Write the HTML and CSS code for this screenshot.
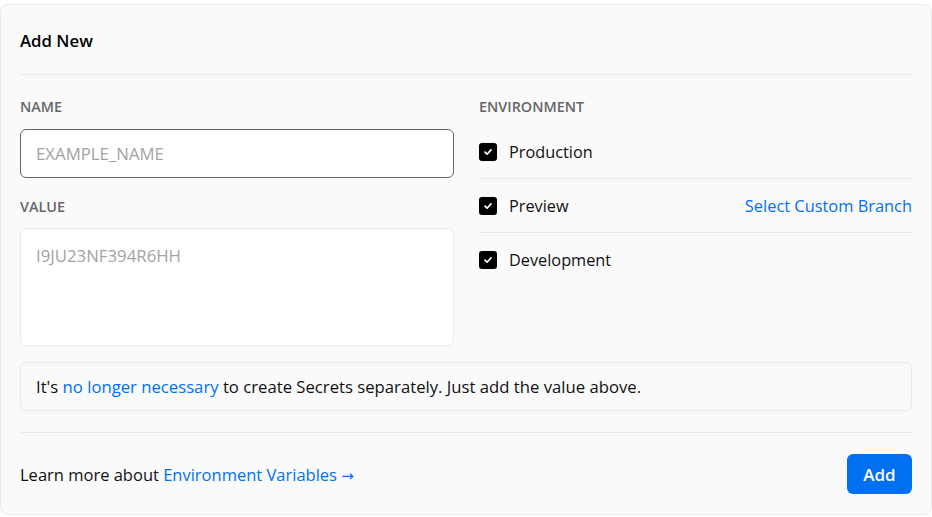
FILE: index.html
```html
<!DOCTYPE html>
<html>
<head>
<meta charset="utf-8">
<link rel="stylesheet" href="styles.css">
</head>
<body>
<div class="card">
  <div class="header">Add New</div>
  <div class="form">
    <div class="col">
      <div class="label">NAME</div>
      <div class="input"><span class="ph">EXAMPLE_NAME</span></div>
      <div class="label label-value">VALUE</div>
      <div class="textarea"><span class="ph">I9JU23NF394R6HH</span></div>
    </div>
    <div class="col">
      <div class="label">ENVIRONMENT</div>
      <div class="envs">
        <div class="env">
          <span class="cb"><svg width="10" height="10" viewBox="0 0 10 10"><path d="M2 5.2 L4.1 7.2 L8 2.9" fill="none" stroke="#fff" stroke-width="1.7" stroke-linecap="round" stroke-linejoin="round"/></svg></span>
          <span class="env-name">Production</span>
        </div>
        <div class="env">
          <span class="cb"><svg width="10" height="10" viewBox="0 0 10 10"><path d="M2 5.2 L4.1 7.2 L8 2.9" fill="none" stroke="#fff" stroke-width="1.7" stroke-linecap="round" stroke-linejoin="round"/></svg></span>
          <span class="env-name">Preview</span>
          <a class="link branch">Select Custom Branch</a>
        </div>
        <div class="env">
          <span class="cb"><svg width="10" height="10" viewBox="0 0 10 10"><path d="M2 5.2 L4.1 7.2 L8 2.9" fill="none" stroke="#fff" stroke-width="1.7" stroke-linecap="round" stroke-linejoin="round"/></svg></span>
          <span class="env-name">Development</span>
        </div>
      </div>
    </div>
  </div>
  <div class="notice-wrap">
    <div class="notice">It's <a class="link">no longer necessary</a> to create Secrets separately. Just add the value above.</div>
  </div>
  <div class="footer">
    <div class="learn">Learn more about <a class="link">Environment Variables <span class="arrow">→</span></a></div>
    <button class="add">Add</button>
  </div>
</div>
</body>
</html>
```

FILE: styles.css
```css
html, body {
  margin: 0;
  padding: 0;
  background: #fff;
}
body {
  font-family: "Open Sans", "Noto Sans", sans-serif;
  color: #111;
  font-size: 16.5px;
}
.card {
  margin-top: 4px;
  width: 932px;
  height: 511px;
  box-sizing: border-box;
  border: 1px solid #eaeaea;
  border-radius: 8px;
  background: #fafafa;
  padding: 0 19px;
}
.header {
  font-size: 16.8px;
  font-weight: 600;
  line-height: 24px;
  padding: 24px 0 21px;
  border-bottom: 1px solid #eaeaea;
  color: #000;
}
.form {
  display: grid;
  grid-template-columns: 434px 433px;
  column-gap: 25px;
  padding-top: 22px;
}
.label {
  font-size: 14.4px;
  font-weight: 600;
  color: #666;
  line-height: 20px;
}
.label-value {
  margin-top: 19px;
}
.input {
  margin-top: 12px;
  height: 49px;
  box-sizing: border-box;
  border: 1px solid #666;
  border-radius: 6px;
  background: #fff;
  padding: 0 15px;
  display: flex;
  align-items: center;
}
.ph {
  color: #a3a3a3;
  font-size: 16.8px;
  font-weight: 400;
}
.textarea {
  margin-top: 11px;
  height: 118px;
  box-sizing: border-box;
  border: 1px solid #eaeaea;
  border-radius: 6px;
  background: #fff;
  padding: 15px 15px;
}
.textarea .ph {
  line-height: 22px;
}
.envs {
  margin-top: 8px;
}
.env {
  display: flex;
  align-items: center;
  height: 53px;
  border-bottom: 1px solid #eaeaea;
}
.env:last-child {
  border-bottom: none;
}
.cb {
  width: 18px;
  height: 18px;
  border-radius: 3px;
  background: #000;
  display: flex;
  align-items: center;
  justify-content: center;
  margin-right: 12px;
}
.env-name {
  font-size: 16.3px;
  color: #111;
}
.link {
  color: #0070f3;
  text-decoration: none;
}
.branch {
  margin-left: auto;
  font-size: 16.4px;
}
.notice-wrap {
  padding: 16px 0 21px;
  border-bottom: 1px solid #eaeaea;
}
.notice {
  height: 49px;
  box-sizing: border-box;
  border: 1px solid #eaeaea;
  border-radius: 6px;
  padding: 0 15px;
  display: flex;
  align-items: center;
  white-space: pre;
  font-size: 16.7px;
}
.footer {
  display: flex;
  align-items: center;
  justify-content: space-between;
  padding-top: 21px;
}
.arrow {
  font-family: "DejaVu Sans", sans-serif;
  font-size: 15px;
}
.add {
  width: 65px;
  height: 40px;
  border: none;
  border-radius: 6px;
  background: #0070f3;
  color: #fff;
  font-family: "Open Sans", "Noto Sans", sans-serif;
  font-size: 17px;
  font-weight: 600;
  padding: 0;
}
```
